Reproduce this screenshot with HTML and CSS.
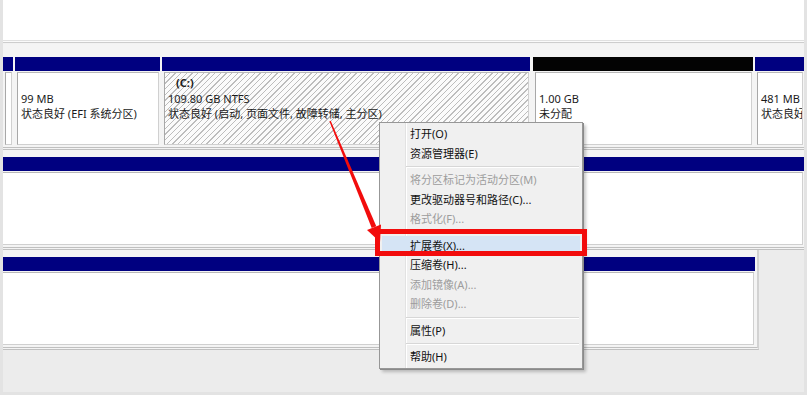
FILE: index.html
```html
<!DOCTYPE html>
<html lang="zh-CN">
<head>
    <meta charset="UTF-8">
    <meta name="viewport" content="width=device-width, initial-scale=1.0">
    <title>磁盘管理</title>
    <link rel="stylesheet" href="styles.css">
</head>
<body>
    <div class="view">
        <div class="top-pane"></div>
        <div class="splitter"></div>

        <div class="disk first">
            <div class="part p-cut">
                <div class="part-head"></div>
                <div class="part-body"></div>
            </div>
            <div class="part p-efi">
                <div class="part-head"></div>
                <div class="part-body">
                    <div>&nbsp;</div>
                    <div>99 MB</div>
                    <div>状态良好 (EFI 系统分区)</div>
                </div>
            </div>
            <div class="part p-sys">
                <div class="part-head"></div>
                <div class="part-body hatch">
                    <div class="name">(C:)</div>
                    <div>109.80 GB NTFS</div>
                    <div>状态良好 (启动, 页面文件, 故障转储, 主分区)</div>
                </div>
            </div>
            <div class="part p-free">
                <div class="part-head free"></div>
                <div class="part-body">
                    <div>&nbsp;</div>
                    <div>1.00 GB</div>
                    <div>未分配</div>
                </div>
            </div>
            <div class="part p-rec">
                <div class="part-head"></div>
                <div class="part-body">
                    <div>&nbsp;</div>
                    <div>481 MB</div>
                    <div>状态良好</div>
                </div>
            </div>
        </div>

        <div class="disk">
            <div class="part p-full">
                <div class="part-head"></div>
                <div class="part-body"></div>
            </div>
        </div>

        <div class="disk short">
            <div class="part p-full">
                <div class="part-head"></div>
                <div class="part-body"></div>
            </div>
        </div>
    </div>

    <ul class="menu">
        <li>打开(O)</li>
        <li>资源管理器(E)</li>
        <li class="sep"></li>
        <li class="off">将分区标记为活动分区(M)</li>
        <li>更改驱动器号和路径(C)...</li>
        <li class="off">格式化(F)...</li>
        <li class="sep"></li>
        <li class="hot">扩展卷(X)...</li>
        <li>压缩卷(H)...</li>
        <li class="off">添加镜像(A)...</li>
        <li class="off">删除卷(D)...</li>
        <li class="sep"></li>
        <li>属性(P)</li>
        <li class="sep"></li>
        <li>帮助(H)</li>
    </ul>

    <!-- annotation drawn over the screenshot -->
    <svg class="mark" width="807" height="395" viewBox="0 0 807 395">
        <polygon points="329.4,121.3 330.7,120.7 376.3,226.3 371.7,228.1" fill="#f20c0c"/>
        <polygon points="381,224.4 380,242 367,230" fill="#f20c0c"/>
        <rect x="377.5" y="231.5" width="207" height="22" fill="none" stroke="#f20c0c" stroke-width="5"/>
    </svg>
</body>
</html>
```

FILE: styles.css
```css
body{
    margin: 0;
    width: 807px;
    height: 395px;
    overflow: hidden;
    position: relative;
    background-color: #e3e3e3;
    font-family: "Noto Sans", "Noto Sans CJK SC", sans-serif;
    font-size: 11px;
    color: #1a1a1a;
}
.view{
    margin: 0 3px;
    height: 392px;
    background-color: #ececec;
    overflow: hidden;
}
.top-pane{
    height: 40px;
    background-color: #fff;
}
.splitter{
    height: 4px;
    background: linear-gradient(#e0e0e0 0 1px, #fafafa 1px 2px, #cdcdcd 2px 3px, #f2f2f2 3px);
}
.disk{
    display: flex;
    gap: 2px;
    background-color: #f4f4f4;
    padding: 7px 0 2px;
    border-bottom: 3px double #c0c0c0;
    overflow: hidden;
}
.disk.first{
    padding-top: 13px;
}
.disk.short{
    width: 752px;
    padding-right: 2px;
    border-right: 2px solid #d2d2d2;
}
.part{
    display: flex;
    flex-direction: column;
    height: 88px;
    flex-shrink: 0;
}
.part-head{
    height: 14px;
    background-color: #000080;
}
.part-head.free{
    background-color: #030303;
}
.part-body{
    flex: 1;
    margin: 1px 1px 0 2px;
    padding: 2px 0 0 3px;
    background-color: #fff;
    border: 1px solid #d0d0d0;
    border-left-color: #a8a8a8;
    border-top-color: #b8b8b8;
    line-height: 15.5px;
    white-space: nowrap;
    overflow: hidden;
}
.part-body.hatch{
    background: repeating-linear-gradient(135deg, #fbfbfb 0 3px, #bdbdbd 3px 4px);
}
.name{
    font-weight: bold;
    padding-left: 8px;
}
.p-cut{ width: 10px; }
.p-efi{ width: 145px; }
.p-sys{ width: 368px; }
.p-free{ width: 220px; margin-left: 1px; }
.p-rec{ width: 49px; }
.p-full{ flex: 1; }
.p-full .part-body{
    margin-left: 0;
    border-left: none;
}

.menu{
    position: absolute;
    left: 379px;
    top: 122px;
    width: 202px;
    margin: 0;
    padding: 1px 0;
    list-style: none;
    border: 1px solid #979797;
    background: linear-gradient(to right, #f0f0f0 0 25px, #e2e2e2 25px 26px, #fff 26px 27px, #f0f0f0 27px);
    box-shadow: 1px 1px 0 #8a8a8a, 3px 3px 3px rgba(0, 0, 0, 0.22);
    color: #111;
}
.menu li{
    height: 19.5px;
    line-height: 19.5px;
    padding-left: 30px;
    white-space: nowrap;
}
.menu li.off{
    color: #9d9d9d;
}
.menu li.hot{
    margin: 0 2px;
    padding-left: 28px;
    background-color: #d5e4f5;
}
.menu li.sep{
    height: 7px;
    padding: 0;
    margin: 0 3px 0 26px;
    background: linear-gradient(transparent 3px, #d7d7d7 3px 4px, #fff 4px 5px, transparent 5px);
}
.mark{
    position: absolute;
    left: 0;
    top: 0;
    pointer-events: none;
}
```
